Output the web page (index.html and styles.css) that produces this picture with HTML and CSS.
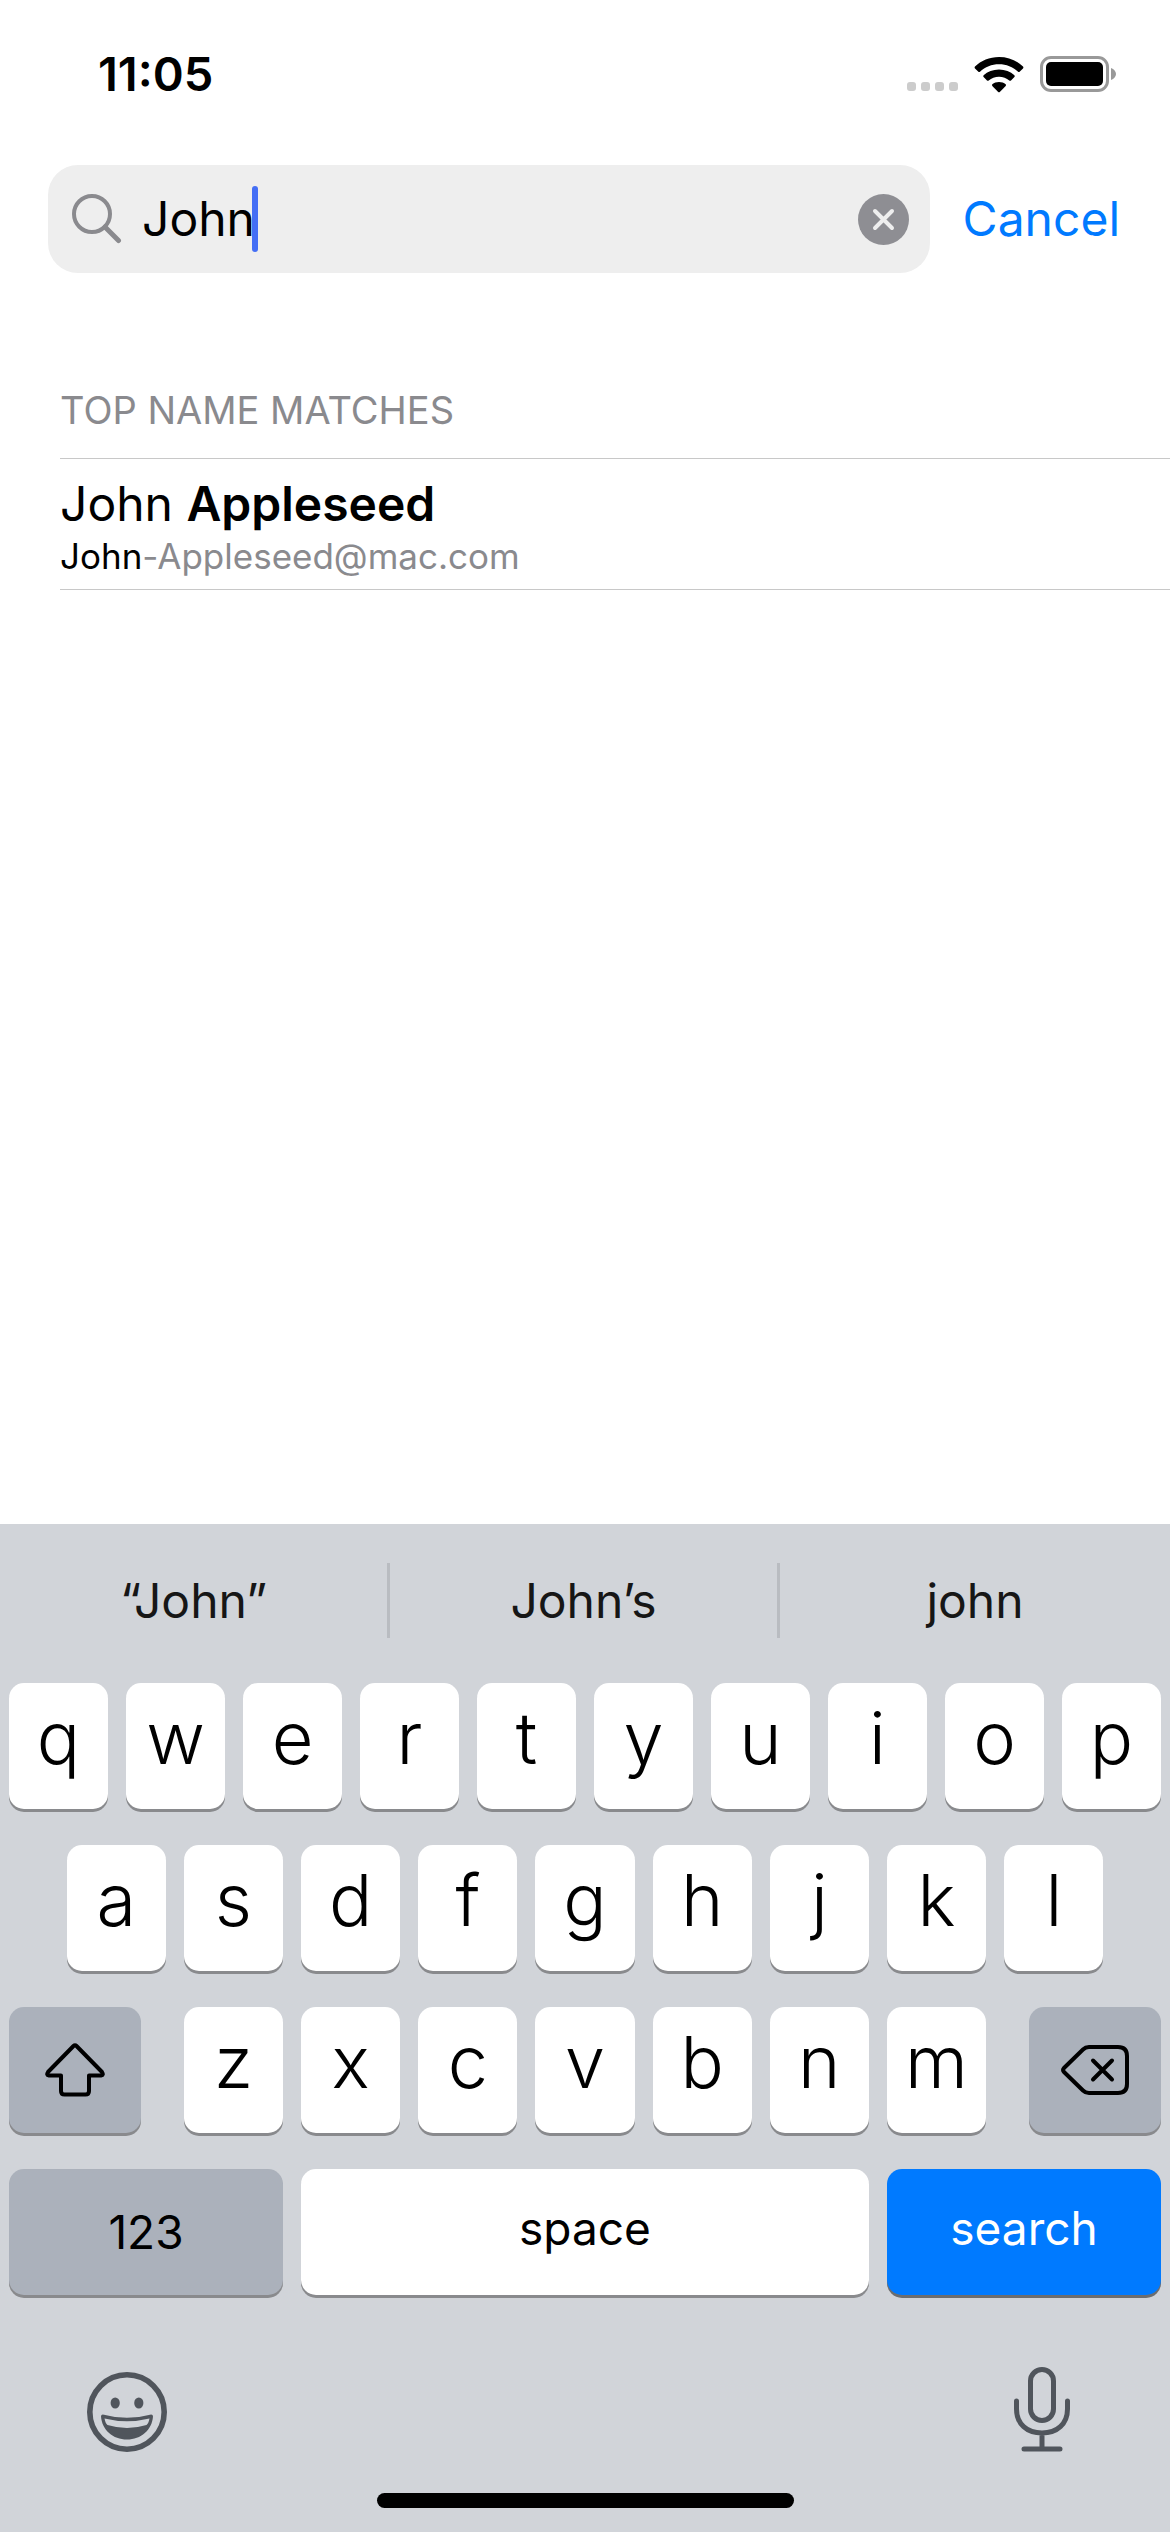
FILE: index.html
```html
<!DOCTYPE html>
<html lang="en">
<head>
<meta charset="utf-8">
<meta name="viewport" content="width=device-width, initial-scale=1">
<title>Search</title>
<link rel="stylesheet" href="styles.css">
</head>
<body>
<div class="screen">
  <header class="status-bar">
    <time class="clock">11:05</time>
    <div class="status-icons">
      <span class="signal"><i></i><i></i><i></i><i></i></span>
      <svg class="wifi" width="50" height="37" viewBox="0 0 50 37" aria-hidden="true">
        <path d="M25 1C34.500 1 43 4.600 49 10.500Q49.800 11.500 49 12.400L45.600 15.800Q44.900 16.400 44 15.700C38.900 10.900 32.300 8.300 25 8.300S11.100 10.900 6 15.700Q5.100 16.400 4.400 15.800L1 12.400Q0.200 11.500 1 10.500C7 4.600 15.500 1 25 1Z"/>
        <path d="M25 13.500C31.100 13.500 36.400 15.700 40.400 19.300Q41.200 20.200 40.400 21.100L37 24.500Q36.200 25.200 35.300 24.500C32.500 22.100 29 20.700 25 20.700S17.500 22.100 14.700 24.500Q13.800 25.200 13 24.500L9.600 21.100Q8.800 20.200 9.600 19.300C13.600 15.700 18.900 13.500 25 13.500Z"/>
        <path d="M25 26C27.600 26 29.900 26.900 31.700 28.300Q32.400 29 31.700 29.900L25.800 35.900Q25 36.600 24.200 35.900L18.300 29.900Q17.600 29 18.300 28.300C20.100 26.900 22.400 26 25 26Z"/>
      </svg>
      <svg class="battery" width="76" height="36" viewBox="0 0 76 36" aria-hidden="true">
        <rect x="1.500" y="1.500" width="66" height="33" rx="9.500" fill="none" stroke="#999" stroke-width="3"/>
        <rect x="6" y="6" width="57" height="24" rx="5"/>
        <path d="M71 12C74 13 76 15.500 76 18S74 23 71 24Z" fill="#999"/>
      </svg>
    </div>
  </header>

  <form class="search" role="search">
    <label class="field">
      <svg width="50" height="50" viewBox="0 0 50 50" aria-hidden="true">
        <circle cx="20" cy="20" r="18" fill="none" stroke="#8a8a8e" stroke-width="4"/>
        <path d="M33 33L46.500 46.500" stroke="#8a8a8e" stroke-width="5" stroke-linecap="round"/>
      </svg>
      <span class="entry">
        <input class="query" type="text" value="John" aria-label="Search contacts">
        <span class="caret"></span>
      </span>
      <button class="clear" type="button" aria-label="Clear text">
        <svg width="51" height="51" viewBox="0 0 51 51" aria-hidden="true">
          <circle cx="25.500" cy="25.500" r="25.500" fill="#8e8e93"/>
          <path d="M17 17L34 34M34 17L17 34" stroke="#eee" stroke-width="4" stroke-linecap="round"/>
        </svg>
      </button>
    </label>
    <button class="cancel" type="button">Cancel</button>
  </form>

  <main class="results">
    <h2 class="section-title">TOP NAME MATCHES</h2>
    <ul class="contacts">
      <li class="contact">
        <a class="contact-link" href="#john-appleseed">
          <span class="name">John <b>Appleseed</b></span>
          <span class="email"><em>John</em>-Appleseed@mac.com</span>
        </a>
      </li>
    </ul>
  </main>

  <section class="keyboard" aria-label="Keyboard">
    <div class="suggestions">
      <button type="button">“John”</button>
      <button type="button">John’s</button>
      <button type="button">john</button>
    </div>
    <div class="rows">
      <div class="row">
        <button class="key">q</button><button class="key">w</button><button class="key">e</button><button class="key">r</button><button class="key">t</button><button class="key">y</button><button class="key">u</button><button class="key">i</button><button class="key">o</button><button class="key">p</button>
      </div>
      <div class="row row-home">
        <button class="key">a</button><button class="key">s</button><button class="key">d</button><button class="key">f</button><button class="key">g</button><button class="key">h</button><button class="key">j</button><button class="key">k</button><button class="key">l</button>
      </div>
      <div class="row row-shift">
        <button class="key key-icon" aria-label="Shift">
          <svg width="60" height="54" viewBox="0 0 60 54" aria-hidden="true">
            <path d="M28.500 3Q30 1.500 31.500 3L57 29Q59 32 56 32.500H44V48Q44 51.500 40.500 51.500H19.500Q16 51.500 16 48V32.500H4Q1 32 3 29Z" fill="none" stroke="#000" stroke-width="4" stroke-linejoin="round"/>
          </svg>
        </button>
        <div class="letters">
          <button class="key">z</button><button class="key">x</button><button class="key">c</button><button class="key">v</button><button class="key">b</button><button class="key">n</button><button class="key">m</button>
        </div>
        <button class="key key-icon" aria-label="Delete">
          <svg width="68" height="50" viewBox="0 0 68 50" aria-hidden="true">
            <path d="M22 4.500Q24.500 2 28 2H57Q66 2 66 11V39Q66 48 57 48H28Q24.500 48 22 45.500L3 27Q1 25 3 23Z" fill="none" stroke="#000" stroke-width="4" stroke-linejoin="round"/>
            <path d="M32 15.500L51 34.500M51 15.500L32 34.500" stroke="#000" stroke-width="4" stroke-linecap="round"/>
          </svg>
        </button>
      </div>
      <div class="row row-space">
        <button class="key key-word key-numbers">123</button>
        <button class="key key-word">space</button>
        <button class="key key-word key-search">search</button>
      </div>
    </div>
    <div class="tools">
      <button type="button" aria-label="Emoji">
        <svg width="80" height="80" viewBox="0 0 80 80" aria-hidden="true">
          <circle cx="40" cy="40" r="37.200" fill="none" stroke="#50555c" stroke-width="5.600"/>
          <ellipse cx="28.200" cy="31" rx="4.600" ry="5.600" fill="#50555c"/>
          <ellipse cx="51.800" cy="31" rx="4.600" ry="5.600" fill="#50555c"/>
          <path d="M14 44.500Q14 42 17 42.700Q40 49 63 42.700Q66 42 66 44.500C65 58 54 67.500 40 67.500S15 58 14 44.500Z" fill="#50555c"/>
          <path d="M17.500 46.500Q40 52 62.500 46.500Q61.500 51.500 59.500 53Q40 59 20.500 53Q18.500 51.500 17.500 46.500Z" fill="#d1d4d9"/>
        </svg>
      </button>
      <button type="button" aria-label="Dictate">
        <svg width="56" height="85" viewBox="0 0 56 85" aria-hidden="true">
          <g fill="none" stroke="#50555c" stroke-width="5" stroke-linecap="round">
            <rect x="16.500" y="2.500" width="23" height="51" rx="11.500"/>
            <path d="M2.500 34V42C2.500 57 13 66 28 66S53.500 57 53.500 42V34M28 66V81M10 82H46"/>
          </g>
        </svg>
      </button>
    </div>
    <div class="home-indicator"></div>
  </section>
</div>
</body>
</html>
```

FILE: styles.css
```css
* {
  box-sizing: border-box;
}

body {
  margin: 0;
  background: #fff;
  color: #000;
  font-family: Inter, "Liberation Sans", sans-serif;
}

button {
  margin: 0;
  padding: 0;
  border: 0;
  background: none;
  color: inherit;
  font: inherit;
}

svg {
  display: block;
  flex: none;
}

.screen {
  display: flex;
  flex-direction: column;
  min-height: 100vh;
}

/* Status bar */
.status-bar {
  display: flex;
  align-items: center;
  justify-content: space-between;
  height: 148px;
  padding: 0 54px 0 98px;
}

.clock {
  font-size: 47px;
  font-weight: 600;
  line-height: 56px;
}

.status-icons {
  display: flex;
  align-items: center;
  gap: 16px;
}

.signal {
  display: flex;
  gap: 5px;
  align-self: flex-end;
  padding-bottom: 2px;
}

.signal i {
  width: 9px;
  height: 9px;
  border-radius: 3px;
  background: #ccc;
}

/* Search form */
.search {
  display: flex;
  align-items: center;
  gap: 33px;
  margin-top: 17px;
  padding: 0 50px 0 48px;
}

.field {
  display: flex;
  flex: 1;
  align-items: center;
  height: 108px;
  padding: 0 21px 0 24px;
  border-radius: 30px;
  background: #eee;
}

.entry {
  display: flex;
  flex: 1;
  align-items: center;
  min-width: 0;
  margin-left: 20px;
}

.query {
  width: 112px;
  padding: 0;
  border: 0;
  outline: 0;
  background: none;
  color: inherit;
  font: inherit;
  font-size: 48px;
  line-height: 60px;
}

.caret {
  width: 6px;
  height: 66px;
  margin-left: -2px;
  border-radius: 3px;
  background: #446ef5;
}

.cancel {
  color: #007aff;
  font-size: 48px;
  line-height: 60px;
}

/* Results */
.results {
  flex: 1;
  padding-left: 60px;
}

.section-title {
  margin: 0;
  padding: 113px 0 24px;
  border-bottom: 1px solid #c8c8c8;
  color: #8a8a8e;
  font-size: 38px;
  font-weight: 400;
  line-height: 48px;
}

.contacts {
  margin: 0;
  padding: 0;
  list-style: none;
}

.contact {
  border-bottom: 1px solid #c8c8c8;
}

.contact-link {
  display: block;
  padding: 15px 0 11px;
  color: inherit;
  text-decoration: none;
}

.name {
  display: block;
  font-size: 48px;
  line-height: 60px;
}

.name b {
  font-weight: 600;
}

.email {
  display: block;
  color: #8a8a8e;
  font-size: 35px;
  line-height: 44px;
}

.email em {
  color: #000;
  font-style: normal;
}

/* Keyboard */
.keyboard {
  padding-bottom: 24px;
  background: #d1d4d9;
}

.suggestions {
  display: grid;
  grid-template-columns: repeat(3, 1fr);
  padding: 39px 0 45px;
  color: #161616;
  font-size: 48px;
  line-height: 75px;
}

.suggestions button:not(:last-child) {
  border-right: 3px solid #b9bcc1;
}

.rows {
  display: flex;
  flex-direction: column;
  gap: 36px;
  padding: 0 9px;
}

.row,
.letters {
  display: grid;
  grid-template-columns: repeat(10, 1fr);
  gap: 18px;
}

.row-home {
  grid-template-columns: repeat(9, 1fr);
  padding: 0 5%;
}

.row-shift {
  grid-template-columns: 132px 1fr 132px;
  gap: 43px;
}

.letters {
  grid-template-columns: repeat(7, 1fr);
}

.row-space {
  grid-template-columns: 274px 1fr 274px;
}

.key {
  height: 126px;
  padding-bottom: 16px;
  border-radius: 15px;
  background: #fff;
  box-shadow: 0 3px 0 #898a8d;
  font-size: 72px;
  font-weight: 360;
  line-height: 88px;
}

.key-icon {
  display: flex;
  align-items: center;
  justify-content: center;
  padding: 0;
  background: #abb1bb;
}

.key-word {
  padding-bottom: 8px;
  font-size: 46px;
  font-weight: 400;
}

.key-numbers {
  padding: 0;
  background: #abb1bb;
}

.key-search {
  background: #007aff;
  box-shadow: 0 3px 0 #6b6d70;
  color: #fff;
}

.tools {
  display: flex;
  align-items: flex-end;
  justify-content: space-between;
  padding: 72px 100px 41px 87px;
}

.home-indicator {
  width: 417px;
  height: 15px;
  margin: 0 auto;
  border-radius: 8px;
  background: #000;
}
```
